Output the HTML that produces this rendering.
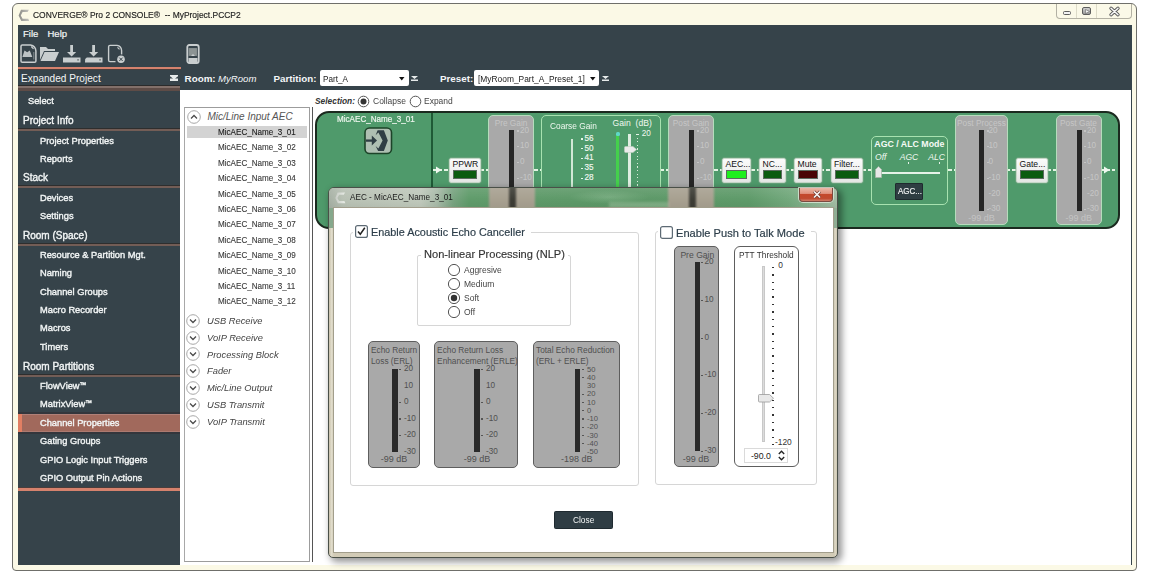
<!DOCTYPE html><html><head><meta charset="utf-8"><style>
*{margin:0;padding:0;box-sizing:border-box}
html,body{width:1152px;height:576px;overflow:hidden;background:#fff;font-family:"Liberation Sans",sans-serif}
.a{position:absolute}
.t{position:absolute;white-space:pre;line-height:1}
svg{position:absolute;overflow:visible}
</style></head><body>
<div class="a" style="left:12px;top:3px;width:1125px;height:568px;border:1px solid #6f6f6a;border-radius:6px 6px 4px 4px;background:#fbf9e6"></div>
<svg style="left:0;top:0" width="40" height="30" viewBox="0 0 40 30"><defs><linearGradient id="cg" x1="0" y1="0" x2="1" y2="0"><stop offset="0" stop-color="#8c8c88"/><stop offset="1" stop-color="#c4c4be"/></linearGradient></defs><path d="M21 9.8 H28.9 L27.6 12.1 H22.6 L20.8 15.4 L22.6 18.8 H28.3 L29.2 21 H21.3 L18.6 15.4 Z" fill="url(#cg)"/></svg>
<div class="t" style="left:33.00px;top:11.01px;font-size:8.968px;color:#1c1c1c;transform:scaleX(0.9434);transform-origin:0 0;-webkit-text-stroke:0.15px #1c1c1c">CONVERGE® Pro 2 CONSOLE®  -- MyProject.PCCP2</div>
<div class="a" style="left:1056px;top:4px;width:76px;height:15px;border:1px solid #b3b1a4;border-top:none;border-radius:0 0 4px 4px;background:#fbf9e8"></div>
<div class="a" style="left:1076px;top:4px;width:1px;height:14px;background:#dddbc8"></div>
<div class="a" style="left:1096px;top:4px;width:1px;height:14px;background:#dddbc8"></div>
<div class="a" style="left:1062.5px;top:11px;width:8.5px;height:4px;border:1px solid #5c5c5c;border-radius:1.5px;background:#f2f2f2"></div>
<div class="a" style="left:1082px;top:7.3px;width:9.299999999999955px;height:7.7px;border:1px solid #5c5c5c;border-radius:2px;background:linear-gradient(#cfcfcf,#9a9a9a)"></div>
<svg style="left:1084.5px;top:9px" width="5" height="5" viewBox="0 0 5 5"><path d="M0.5 0.5 L4.5 2.5 L0.5 4.5 Z" fill="#f4f4f4" stroke="#555" stroke-width="0.5"/></svg>
<svg style="left:1109px;top:7px" width="11" height="9" viewBox="0 0 11 9"><path d="M2 1.3 L9 7.7 M9 1.3 L2 7.7" stroke="#5a5a5a" stroke-width="3.4" stroke-linecap="round"/><path d="M2 1.3 L9 7.7 M9 1.3 L2 7.7" stroke="#f8f8f8" stroke-width="1.5" stroke-linecap="round"/></svg>
<div class="a" style="left:18px;top:25px;width:1114px;height:540px;background:#36434a"></div>
<div class="t" style="left:23.00px;top:29.46px;font-size:9.500px;color:#f4f6f6;-webkit-text-stroke:0.2px #f4f6f6">File</div>
<div class="t" style="left:47.50px;top:29.46px;font-size:9.500px;color:#f4f6f6;-webkit-text-stroke:0.2px #f4f6f6">Help</div>
<svg style="left:20px;top:44px" width="18" height="20" viewBox="0 0 18 20">
<path d="M2.3 0.9 H10.5 Q15.6 1.8 15.9 7 V17 Q15.9 18.3 14.6 18.3 H2.3 Q1 18.3 1 17 V2.2 Q1 0.9 2.3 0.9 Z" fill="none" stroke="#c9cecf" stroke-width="1.5"/>
<path d="M11.3 2.5 L13.5 4.8" stroke="#c9cecf" stroke-width="1.2"/>
<path d="M2.4 13 L4.5 6.5 L7.2 8.2 L9.8 6.5 L12.3 13 Z" fill="#c9cecf" opacity="0.92"/>
<path d="M13.8 8 V15.5" stroke="#c9cecf" stroke-width="0.9" opacity="0.6"/>
</svg>
<svg style="left:39px;top:45px" width="21" height="17" viewBox="0 0 21 17">
<path d="M1 2 H7 L9 4 H16 V6 H5 L1 15 Z" fill="#c9cecf"/>
<path d="M5.5 7 H20 L16 16 H1.5 Z" fill="#c9cecf"/>
</svg>
<svg style="left:62px;top:44px" width="19" height="20" viewBox="0 0 19 20">
<path d="M8.2 1 H11 V8 H14.2 L9.6 12.6 L5 8 H8.2 Z" fill="#c9cecf"/>
<path d="M1 13.5 H18.5 V18.5 H1 Z" fill="#c9cecf"/>
<path d="M15.3 15.2 H16.8 V16.4 H15.3 Z" fill="#55605f"/>
</svg>
<svg style="left:84px;top:44px" width="19" height="20" viewBox="0 0 19 20">
<path d="M8.2 1 H11 V8 H14.2 L9.6 12.6 L5 8 H8.2 Z" fill="#c9cecf"/>
<path d="M2.8 13.5 H18.5 V18.5 H1 L1.2 15 Z" fill="#c9cecf"/>
<path d="M15.3 15.2 H16.8 V16.4 H15.3 Z" fill="#55605f"/>
</svg>
<svg style="left:107px;top:44px" width="19" height="20" viewBox="0 0 19 20">
<path d="M8.5 17.6 H3 Q1.6 17.6 1.6 16.2 V2.8 Q1.6 1.4 3 1.4 H10 Q14.3 2 14.6 6.5 V10.5" fill="none" stroke="#c9cecf" stroke-width="1.4"/>
<path d="M10.5 3.3 L12.5 5.3" stroke="#c9cecf" stroke-width="1.1"/>
<circle cx="14" cy="15.3" r="4.6" fill="#36434a"/><circle cx="14" cy="15.3" r="3.8" fill="#c9cecf"/>
<path d="M12.3 13.6 L15.7 17 M15.7 13.6 L12.3 17" stroke="#36434a" stroke-width="1"/>
</svg>
<svg style="left:186px;top:44px" width="14" height="20" viewBox="0 0 14 20">
<rect x="1.3" y="1" width="11.4" height="18" rx="2" fill="none" stroke="#c9cecf" stroke-width="1.8"/>
<rect x="3" y="4" width="8" height="8" fill="#7d8586"/>
<path d="M3 4 V12 M5 4 V12 M7 4 V12 M9 4 V12 M3 6 H11 M3 8 H11 M3 10 H11" stroke="#9aa2a3" stroke-width="0.6"/>
<path d="M5 12 L7 10 L9 12 Z" fill="#c9cecf"/>
<rect x="2.5" y="14" width="9" height="4" fill="#c9cecf"/>
</svg>
<div class="a" style="left:18px;top:66.6px;width:163px;height:2.8000000000000114px;background:#d6826d"></div>
<div class="a" style="left:18px;top:69.4px;width:163px;height:0.7999999999999972px;background:#4a3e3c"></div>
<div class="t" style="left:21.00px;top:74.15px;font-size:10.100px;color:#f4f6f6;">Expanded Project</div>
<svg style="left:170px;top:75px" width="8" height="6" viewBox="0 0 8 6"><path d="M0 0 H8 V1 L5 3.5 H8 V5.5 H0 V3.5 H3 L0 1 Z" fill="#e8ecec"/></svg>
<div class="a" style="left:18px;top:85px;width:162px;height:1px;background:#2b2b2b"></div>
<div class="a" style="left:18px;top:86px;width:162px;height:2px;background:#82706a"></div>
<div class="a" style="left:18px;top:88px;width:162px;height:3px;background:#5e4c47"></div>
<div class="t" style="left:28.00px;top:96.37px;font-size:9.951px;color:#f2f5f5;transform:scaleX(0.9346);transform-origin:0 0;-webkit-text-stroke:0.4px #f2f5f5">Select</div>
<div class="t" style="left:22.50px;top:114.71px;font-size:10.500px;color:#f2f5f5;transform:scaleX(0.9524);transform-origin:0 0;-webkit-text-stroke:0.4px #f2f5f5">Project Info</div>
<div class="a" style="left:18px;top:128px;width:162px;height:1px;background:#2e2e2e"></div>
<div class="a" style="left:18px;top:129px;width:162px;height:2px;background:#735d56"></div>
<div class="t" style="left:39.70px;top:135.57px;font-size:9.951px;color:#f2f5f5;transform:scaleX(0.9346);transform-origin:0 0;-webkit-text-stroke:0.4px #f2f5f5">Project Properties</div>
<div class="t" style="left:39.70px;top:154.17px;font-size:9.951px;color:#f2f5f5;transform:scaleX(0.9346);transform-origin:0 0;-webkit-text-stroke:0.4px #f2f5f5">Reports</div>
<div class="t" style="left:22.50px;top:172.01px;font-size:10.500px;color:#f2f5f5;transform:scaleX(0.9524);transform-origin:0 0;-webkit-text-stroke:0.4px #f2f5f5">Stack</div>
<div class="a" style="left:18px;top:185px;width:162px;height:1px;background:#2e2e2e"></div>
<div class="a" style="left:18px;top:186px;width:162px;height:2px;background:#735d56"></div>
<div class="t" style="left:39.70px;top:192.82px;font-size:9.951px;color:#f2f5f5;transform:scaleX(0.9346);transform-origin:0 0;-webkit-text-stroke:0.4px #f2f5f5">Devices</div>
<div class="t" style="left:39.70px;top:211.27px;font-size:9.951px;color:#f2f5f5;transform:scaleX(0.9346);transform-origin:0 0;-webkit-text-stroke:0.4px #f2f5f5">Settings</div>
<div class="t" style="left:22.50px;top:229.86px;font-size:10.500px;color:#f2f5f5;transform:scaleX(0.9524);transform-origin:0 0;-webkit-text-stroke:0.4px #f2f5f5">Room (Space)</div>
<div class="a" style="left:18px;top:243px;width:162px;height:1px;background:#2e2e2e"></div>
<div class="a" style="left:18px;top:244px;width:162px;height:2px;background:#735d56"></div>
<div class="t" style="left:39.70px;top:249.57px;font-size:9.951px;color:#f2f5f5;transform:scaleX(0.9346);transform-origin:0 0;-webkit-text-stroke:0.4px #f2f5f5">Resource &amp; Partition Mgt.</div>
<div class="t" style="left:39.70px;top:268.27px;font-size:9.951px;color:#f2f5f5;transform:scaleX(0.9346);transform-origin:0 0;-webkit-text-stroke:0.4px #f2f5f5">Naming</div>
<div class="t" style="left:39.70px;top:286.57px;font-size:9.951px;color:#f2f5f5;transform:scaleX(0.9346);transform-origin:0 0;-webkit-text-stroke:0.4px #f2f5f5">Channel Groups</div>
<div class="t" style="left:39.70px;top:304.87px;font-size:9.951px;color:#f2f5f5;transform:scaleX(0.9346);transform-origin:0 0;-webkit-text-stroke:0.4px #f2f5f5">Macro Recorder</div>
<div class="t" style="left:39.70px;top:323.27px;font-size:9.951px;color:#f2f5f5;transform:scaleX(0.9346);transform-origin:0 0;-webkit-text-stroke:0.4px #f2f5f5">Macros</div>
<div class="t" style="left:39.70px;top:341.97px;font-size:9.951px;color:#f2f5f5;transform:scaleX(0.9346);transform-origin:0 0;-webkit-text-stroke:0.4px #f2f5f5">Timers</div>
<div class="t" style="left:22.50px;top:360.61px;font-size:10.500px;color:#f2f5f5;transform:scaleX(0.9524);transform-origin:0 0;-webkit-text-stroke:0.4px #f2f5f5">Room Partitions</div>
<div class="a" style="left:18px;top:374px;width:162px;height:1px;background:#2e2e2e"></div>
<div class="a" style="left:18px;top:375px;width:162px;height:2px;background:#735d56"></div>
<div class="t" style="left:39.70px;top:380.57px;font-size:9.951px;color:#f2f5f5;transform:scaleX(0.9346);transform-origin:0 0;-webkit-text-stroke:0.4px #f2f5f5">FlowView<span style="font-size:70%;vertical-align:2px">™</span></div>
<div class="t" style="left:39.70px;top:399.37px;font-size:9.951px;color:#f2f5f5;transform:scaleX(0.9346);transform-origin:0 0;-webkit-text-stroke:0.4px #f2f5f5">MatrixView<span style="font-size:70%;vertical-align:2px">™</span></div>
<div class="a" style="left:18px;top:411.5px;width:162px;height:22.0px;background:#34363c"></div>
<div class="a" style="left:18px;top:413.5px;width:162px;height:18.0px;background:#a1695c;border-top:1px solid #b08078;border-bottom:1px solid #ad7a70"></div>
<div class="a" style="left:18px;top:413.5px;width:4px;height:18.0px;background:#e17f63"></div>
<div class="t" style="left:39.70px;top:418.07px;font-size:9.951px;color:#f2f5f5;transform:scaleX(0.9346);transform-origin:0 0;-webkit-text-stroke:0.4px #f2f5f5">Channel Properties</div>
<div class="t" style="left:39.70px;top:436.37px;font-size:9.951px;color:#f2f5f5;transform:scaleX(0.9346);transform-origin:0 0;-webkit-text-stroke:0.4px #f2f5f5">Gating Groups</div>
<div class="t" style="left:39.70px;top:455.17px;font-size:9.951px;color:#f2f5f5;transform:scaleX(0.9346);transform-origin:0 0;-webkit-text-stroke:0.4px #f2f5f5">GPIO Logic Input Triggers</div>
<div class="t" style="left:39.70px;top:473.17px;font-size:9.951px;color:#f2f5f5;transform:scaleX(0.9346);transform-origin:0 0;-webkit-text-stroke:0.4px #f2f5f5">GPIO Output Pin Actions</div>
<div class="a" style="left:18px;top:487px;width:163px;height:1px;background:#4a3e3c"></div>
<div class="a" style="left:18px;top:488px;width:163px;height:3px;background:#d6826d"></div>
<svg style="left:170px;top:76px" width="8" height="5" viewBox="0 0 8 5"><path d="M0 0 H8 L4 3 Z M0 3.6 H8 V5 H0 Z" fill="#e6eaea"/></svg>
<div class="t" style="left:184.60px;top:74.20px;font-size:9.800px;color:#f4f6f8;font-weight:bold">Room:</div>
<div class="t" style="left:218.00px;top:74.37px;font-size:9.600px;color:#f4f6f8;font-style:italic">MyRoom</div>
<div class="t" style="left:273.50px;top:74.20px;font-size:9.800px;color:#f4f6f8;font-weight:bold">Partition:</div>
<div class="a" style="left:320px;top:70px;width:89px;height:16px;background:#fff;border-radius:2px"></div>
<div class="t" style="left:322.50px;top:74.69px;font-size:8.639px;color:#222;transform:scaleX(0.9434);transform-origin:0 0;">Part_A</div>
<svg style="left:398.5px;top:76.5px" width="5.5" height="3.5" viewBox="0 0 5.5 3.5"><path d="M0 0 H5.5 L2.75 3.5 Z" fill="#111"/></svg>
<svg style="left:411px;top:76px" width="7" height="5" viewBox="0 0 7 5"><path d="M0 0 H7 L3.5 3 Z M0 3.6 H7 V5 H0 Z" fill="#e6eaea"/></svg>
<div class="t" style="left:440.00px;top:74.20px;font-size:9.800px;color:#f4f6f8;font-weight:bold">Preset:</div>
<div class="a" style="left:474px;top:70px;width:125px;height:16px;background:#fff;border-radius:2px"></div>
<div class="t" style="left:477.50px;top:74.53px;font-size:8.820px;color:#222;transform:scaleX(0.9524);transform-origin:0 0;">[MyRoom_Part_A_Preset_1]</div>
<svg style="left:590px;top:76.5px" width="5.5" height="3.5" viewBox="0 0 5.5 3.5"><path d="M0 0 H5.5 L2.75 3.5 Z" fill="#111"/></svg>
<svg style="left:602px;top:76px" width="7" height="5" viewBox="0 0 7 5"><path d="M0 0 H7 L3.5 3 Z M0 3.6 H7 V5 H0 Z" fill="#e6eaea"/></svg>
<div class="a" style="left:180px;top:90px;width:951px;height:475px;background:#fff"></div>
<div class="t" style="left:315.00px;top:96.79px;font-size:8.400px;color:#333;font-weight:bold;font-style:italic">Selection:</div>
<svg style="left:357px;top:95px" width="13" height="13" viewBox="0 0 13 13"><circle cx="6.5" cy="6.5" r="5.3" fill="#fff" stroke="#555" stroke-width="1"/><circle cx="6.5" cy="6.5" r="3" fill="#333"/></svg>
<div class="t" style="left:372.80px;top:97.04px;font-size:8.925px;color:#444;transform:scaleX(0.9524);transform-origin:0 0;">Collapse</div>
<svg style="left:408.5px;top:95px" width="13" height="13" viewBox="0 0 13 13"><circle cx="6.5" cy="6.5" r="5.3" fill="#fff" stroke="#555" stroke-width="1"/></svg>
<div class="t" style="left:424.20px;top:97.04px;font-size:8.925px;color:#444;transform:scaleX(0.9524);transform-origin:0 0;">Expand</div>
<div class="a" style="left:184px;top:107px;width:126px;height:455px;border:1px solid #9c9c9c;border-left-color:#a8a8a8;background:#fff"></div>
<div class="a" style="left:311.5px;top:107px;width:1.5px;height:455px;background:#555"></div>
<svg style="left:186.5px;top:110px" width="14" height="14" viewBox="-7 -7 14 14"><circle r="6.3" fill="#fff" stroke="#a8a8a8" stroke-width="1"/><path d="M-3 1.5 L0 -1.5 L3 1.5" fill="none" stroke="#4a4a4a" stroke-width="1.25"/></svg>
<div class="t" style="left:207.40px;top:111.83px;font-size:10.000px;color:#555;font-style:italic">Mic/Line Input AEC</div>
<div class="a" style="left:187px;top:126px;width:120px;height:12px;background:#d3d3d3"></div>
<div class="t" style="left:217.80px;top:128.02px;font-size:9.072px;color:#1a1a1a;transform:scaleX(0.8929);transform-origin:0 0;-webkit-text-stroke:0.12px #1a1a1a">MicAEC_Name_3_01</div>
<div class="t" style="left:217.80px;top:143.42px;font-size:9.072px;color:#383838;transform:scaleX(0.8929);transform-origin:0 0;-webkit-text-stroke:0.12px #383838">MicAEC_Name_3_02</div>
<div class="t" style="left:217.80px;top:158.82px;font-size:9.072px;color:#383838;transform:scaleX(0.8929);transform-origin:0 0;-webkit-text-stroke:0.12px #383838">MicAEC_Name_3_03</div>
<div class="t" style="left:217.80px;top:174.22px;font-size:9.072px;color:#383838;transform:scaleX(0.8929);transform-origin:0 0;-webkit-text-stroke:0.12px #383838">MicAEC_Name_3_04</div>
<div class="t" style="left:217.80px;top:189.62px;font-size:9.072px;color:#383838;transform:scaleX(0.8929);transform-origin:0 0;-webkit-text-stroke:0.12px #383838">MicAEC_Name_3_05</div>
<div class="t" style="left:217.80px;top:205.02px;font-size:9.072px;color:#383838;transform:scaleX(0.8929);transform-origin:0 0;-webkit-text-stroke:0.12px #383838">MicAEC_Name_3_06</div>
<div class="t" style="left:217.80px;top:220.42px;font-size:9.072px;color:#383838;transform:scaleX(0.8929);transform-origin:0 0;-webkit-text-stroke:0.12px #383838">MicAEC_Name_3_07</div>
<div class="t" style="left:217.80px;top:235.82px;font-size:9.072px;color:#383838;transform:scaleX(0.8929);transform-origin:0 0;-webkit-text-stroke:0.12px #383838">MicAEC_Name_3_08</div>
<div class="t" style="left:217.80px;top:251.22px;font-size:9.072px;color:#383838;transform:scaleX(0.8929);transform-origin:0 0;-webkit-text-stroke:0.12px #383838">MicAEC_Name_3_09</div>
<div class="t" style="left:217.80px;top:266.62px;font-size:9.072px;color:#383838;transform:scaleX(0.8929);transform-origin:0 0;-webkit-text-stroke:0.12px #383838">MicAEC_Name_3_10</div>
<div class="t" style="left:217.80px;top:282.02px;font-size:9.072px;color:#383838;transform:scaleX(0.8929);transform-origin:0 0;-webkit-text-stroke:0.12px #383838">MicAEC_Name_3_11</div>
<div class="t" style="left:217.80px;top:297.42px;font-size:9.072px;color:#383838;transform:scaleX(0.8929);transform-origin:0 0;-webkit-text-stroke:0.12px #383838">MicAEC_Name_3_12</div>
<svg style="left:186.4px;top:313.7px" width="14" height="14" viewBox="-7 -7 14 14"><circle r="6.3" fill="#fff" stroke="#a8a8a8" stroke-width="1"/><path d="M-3 -1.5 L0 1.5 L3 -1.5" fill="none" stroke="#4a4a4a" stroke-width="1.25"/></svg>
<div class="t" style="left:207.20px;top:315.99px;font-size:9.818px;color:#444;transform:scaleX(0.9524);transform-origin:0 0;font-style:italic">USB Receive</div>
<svg style="left:186.4px;top:330.52px" width="14" height="14" viewBox="-7 -7 14 14"><circle r="6.3" fill="#fff" stroke="#a8a8a8" stroke-width="1"/><path d="M-3 -1.5 L0 1.5 L3 -1.5" fill="none" stroke="#4a4a4a" stroke-width="1.25"/></svg>
<div class="t" style="left:207.20px;top:332.81px;font-size:9.818px;color:#444;transform:scaleX(0.9524);transform-origin:0 0;font-style:italic">VoIP Receive</div>
<svg style="left:186.4px;top:347.34px" width="14" height="14" viewBox="-7 -7 14 14"><circle r="6.3" fill="#fff" stroke="#a8a8a8" stroke-width="1"/><path d="M-3 -1.5 L0 1.5 L3 -1.5" fill="none" stroke="#4a4a4a" stroke-width="1.25"/></svg>
<div class="t" style="left:207.20px;top:349.63px;font-size:9.818px;color:#444;transform:scaleX(0.9524);transform-origin:0 0;font-style:italic">Processing Block</div>
<svg style="left:186.4px;top:364.15999999999997px" width="14" height="14" viewBox="-7 -7 14 14"><circle r="6.3" fill="#fff" stroke="#a8a8a8" stroke-width="1"/><path d="M-3 -1.5 L0 1.5 L3 -1.5" fill="none" stroke="#4a4a4a" stroke-width="1.25"/></svg>
<div class="t" style="left:207.20px;top:366.45px;font-size:9.818px;color:#444;transform:scaleX(0.9524);transform-origin:0 0;font-style:italic">Fader</div>
<svg style="left:186.4px;top:380.98px" width="14" height="14" viewBox="-7 -7 14 14"><circle r="6.3" fill="#fff" stroke="#a8a8a8" stroke-width="1"/><path d="M-3 -1.5 L0 1.5 L3 -1.5" fill="none" stroke="#4a4a4a" stroke-width="1.25"/></svg>
<div class="t" style="left:207.20px;top:383.27px;font-size:9.818px;color:#444;transform:scaleX(0.9524);transform-origin:0 0;font-style:italic">Mic/Line Output</div>
<svg style="left:186.4px;top:397.79999999999995px" width="14" height="14" viewBox="-7 -7 14 14"><circle r="6.3" fill="#fff" stroke="#a8a8a8" stroke-width="1"/><path d="M-3 -1.5 L0 1.5 L3 -1.5" fill="none" stroke="#4a4a4a" stroke-width="1.25"/></svg>
<div class="t" style="left:207.20px;top:400.09px;font-size:9.818px;color:#444;transform:scaleX(0.9524);transform-origin:0 0;font-style:italic">USB Transmit</div>
<svg style="left:186.4px;top:414.62px" width="14" height="14" viewBox="-7 -7 14 14"><circle r="6.3" fill="#fff" stroke="#a8a8a8" stroke-width="1"/><path d="M-3 -1.5 L0 1.5 L3 -1.5" fill="none" stroke="#4a4a4a" stroke-width="1.25"/></svg>
<div class="t" style="left:207.20px;top:416.91px;font-size:9.818px;color:#444;transform:scaleX(0.9524);transform-origin:0 0;font-style:italic">VoIP Transmit</div>
<div class="a" style="left:315px;top:111px;width:805px;height:118px;border:2px solid #1b2a1f;border-radius:14px;background:#4f9a6b"></div>
<div class="t" style="left:337.00px;top:115.32px;font-size:9.072px;color:#eef6ee;transform:scaleX(0.8929);transform-origin:0 0;-webkit-text-stroke:0.2px #eef6ee">MicAEC_Name_3_01</div>
<svg style="left:362px;top:125px" width="32" height="32" viewBox="0 0 32 32">
<rect x="3" y="3" width="26.5" height="25.5" rx="4.5" fill="#aebfb2" stroke="#1d4429" stroke-width="1.6"/>
<path d="M13.6 10.3 L15.6 5.3 H21.9 L25.8 15.6 L21.9 26.1 H16.1 L13.6 21.1 L16.4 23.6 L20.6 15.6 L16.4 7.6 Z" fill="#2f3e44"/>
<path d="M4 15.6 H10.5" stroke="#2f3e44" stroke-width="2.3"/>
<path d="M9.8 10.6 L15 15.6 L9.8 20.6 Z" fill="#2f3e44"/>
</svg>
<div class="a" style="left:431px;top:113px;width:1.5px;height:114px;background:#1f5a36"></div>
<div class="a" style="left:433px;top:169.3px;width:16px;height:1.5px;background:repeating-linear-gradient(90deg,#e4f4e4 0 3.5px,transparent 3.5px 5.5px)"></div>
<div class="a" style="left:481px;top:169.3px;width:7px;height:1.5px;background:repeating-linear-gradient(90deg,#e4f4e4 0 3.5px,transparent 3.5px 5.5px)"></div>
<div class="a" style="left:534px;top:169.3px;width:7px;height:1.5px;background:repeating-linear-gradient(90deg,#e4f4e4 0 3.5px,transparent 3.5px 5.5px)"></div>
<div class="a" style="left:661px;top:169.3px;width:7px;height:1.5px;background:repeating-linear-gradient(90deg,#e4f4e4 0 3.5px,transparent 3.5px 5.5px)"></div>
<div class="a" style="left:714px;top:169.3px;width:8px;height:1.5px;background:repeating-linear-gradient(90deg,#e4f4e4 0 3.5px,transparent 3.5px 5.5px)"></div>
<div class="a" style="left:751px;top:169.3px;width:8px;height:1.5px;background:repeating-linear-gradient(90deg,#e4f4e4 0 3.5px,transparent 3.5px 5.5px)"></div>
<div class="a" style="left:785px;top:169.3px;width:9px;height:1.5px;background:repeating-linear-gradient(90deg,#e4f4e4 0 3.5px,transparent 3.5px 5.5px)"></div>
<div class="a" style="left:821px;top:169.3px;width:9px;height:1.5px;background:repeating-linear-gradient(90deg,#e4f4e4 0 3.5px,transparent 3.5px 5.5px)"></div>
<div class="a" style="left:863px;top:169.3px;width:8px;height:1.5px;background:repeating-linear-gradient(90deg,#e4f4e4 0 3.5px,transparent 3.5px 5.5px)"></div>
<div class="a" style="left:948px;top:169.3px;width:7px;height:1.5px;background:repeating-linear-gradient(90deg,#e4f4e4 0 3.5px,transparent 3.5px 5.5px)"></div>
<div class="a" style="left:1007px;top:169.3px;width:9px;height:1.5px;background:repeating-linear-gradient(90deg,#e4f4e4 0 3.5px,transparent 3.5px 5.5px)"></div>
<div class="a" style="left:1048px;top:169.3px;width:8px;height:1.5px;background:repeating-linear-gradient(90deg,#e4f4e4 0 3.5px,transparent 3.5px 5.5px)"></div>
<div class="a" style="left:1101px;top:169.3px;width:16px;height:1.5px;background:repeating-linear-gradient(90deg,#e4f4e4 0 3.5px,transparent 3.5px 5.5px)"></div>
<svg style="left:436px;top:166px" width="6" height="8" viewBox="0 0 6 8"><path d="M0 0.5 L5.5 4 L0 7.5 Z" fill="#f0f8f0"/></svg>
<svg style="left:1104px;top:166px" width="6" height="8" viewBox="0 0 6 8"><path d="M0 0.5 L5.5 4 L0 7.5 Z" fill="#f0f8f0"/></svg>
<div class="a" style="left:449px;top:157.5px;width:32px;height:25.5px;background:linear-gradient(#fbfbfb,#e4e6e4);border:1px solid #c5d8c8;border-radius:2px;box-shadow:0 0 0 0.5px #7fa88a"></div>
<div class="t" style="left:452.50px;top:159.92px;font-size:8.600px;color:#111;">PPWR</div>
<div class="a" style="left:453px;top:170px;width:24px;height:9px;background:#0b5c10;border:1px solid #5c6b60"></div>
<div class="a" style="left:722px;top:157.5px;width:29px;height:25.5px;background:linear-gradient(#fbfbfb,#e4e6e4);border:1px solid #c5d8c8;border-radius:2px;box-shadow:0 0 0 0.5px #7fa88a"></div>
<div class="t" style="left:725.50px;top:159.92px;font-size:8.600px;color:#111;">AEC...</div>
<div class="a" style="left:726px;top:170px;width:21px;height:9px;background:#1ef01e;border:1px solid #5c6b60"></div>
<div class="a" style="left:759px;top:157.5px;width:26.5px;height:25.5px;background:linear-gradient(#fbfbfb,#e4e6e4);border:1px solid #c5d8c8;border-radius:2px;box-shadow:0 0 0 0.5px #7fa88a"></div>
<div class="t" style="left:762.50px;top:159.92px;font-size:8.600px;color:#111;">NC...</div>
<div class="a" style="left:763px;top:170px;width:18.5px;height:9px;background:#0b5c10;border:1px solid #5c6b60"></div>
<div class="a" style="left:794px;top:157.5px;width:27.5px;height:25.5px;background:linear-gradient(#fbfbfb,#e4e6e4);border:1px solid #c5d8c8;border-radius:2px;box-shadow:0 0 0 0.5px #7fa88a"></div>
<div class="t" style="left:797.50px;top:159.92px;font-size:8.600px;color:#111;">Mute</div>
<div class="a" style="left:798px;top:170px;width:19.5px;height:9px;background:#4a0505;border:1px solid #5c6b60"></div>
<div class="a" style="left:830.5px;top:157.5px;width:32.5px;height:25.5px;background:linear-gradient(#fbfbfb,#e4e6e4);border:1px solid #c5d8c8;border-radius:2px;box-shadow:0 0 0 0.5px #7fa88a"></div>
<div class="t" style="left:834.00px;top:159.92px;font-size:8.600px;color:#111;">Filter...</div>
<div class="a" style="left:834.5px;top:170px;width:24.5px;height:9px;background:#0b5c10;border:1px solid #5c6b60"></div>
<div class="a" style="left:1016px;top:157.5px;width:32px;height:25.5px;background:linear-gradient(#fbfbfb,#e4e6e4);border:1px solid #c5d8c8;border-radius:2px;box-shadow:0 0 0 0.5px #7fa88a"></div>
<div class="t" style="left:1019.50px;top:159.92px;font-size:8.600px;color:#111;">Gate...</div>
<div class="a" style="left:1020px;top:170px;width:24px;height:9px;background:#0b5c10;border:1px solid #5c6b60"></div>
<div class="a" style="left:488px;top:115px;width:46px;height:110px;background:#a9a9a9;border:1.5px solid #b6dcbc;border-radius:5px"></div>
<div class="a" style="left:489.5px;top:116px;width:43px;height:14px;overflow:hidden;display:flex;justify-content:center"><div style="white-space:pre;line-height:1;margin-top:3.47px;font-size:8.3px;color:#c6c6c6;flex:none;">Pre Gain</div></div>
<div class="a" style="left:509px;top:130px;width:5px;height:80.5px;background:#262626"></div>
<div class="a" style="left:516.5px;top:130px;width:2.0px;height:2px;background:#c4c4c4"></div>
<div class="t" style="left:520.00px;top:126.56px;font-size:8.200px;color:#c6c6c6;">20</div>
<div class="a" style="left:516.5px;top:146px;width:2.0px;height:1px;background:#c4c4c4"></div>
<div class="t" style="left:520.00px;top:142.31px;font-size:8.200px;color:#c6c6c6;">10</div>
<div class="a" style="left:516.5px;top:162px;width:2.0px;height:1px;background:#c4c4c4"></div>
<div class="t" style="left:520.00px;top:158.06px;font-size:8.200px;color:#c6c6c6;">0</div>
<div class="a" style="left:516.5px;top:178px;width:2.0px;height:1px;background:#c4c4c4"></div>
<div class="t" style="left:520.00px;top:173.81px;font-size:8.200px;color:#c6c6c6;">-10</div>
<div class="a" style="left:516.5px;top:194px;width:2.0px;height:0px;background:#c4c4c4"></div>
<div class="t" style="left:520.00px;top:189.56px;font-size:8.200px;color:#c6c6c6;">-20</div>
<div class="a" style="left:516.5px;top:209px;width:2.0px;height:1px;background:#c4c4c4"></div>
<div class="t" style="left:520.00px;top:205.31px;font-size:8.200px;color:#c6c6c6;">-30</div>
<div class="t" style="left:498.00px;top:213.88px;font-size:9.000px;color:#c4c4c4;">-99 dB</div>
<div class="a" style="left:668px;top:115px;width:46px;height:110px;background:#a9a9a9;border:1.5px solid #b6dcbc;border-radius:5px"></div>
<div class="a" style="left:669.5px;top:116px;width:43px;height:14px;overflow:hidden;display:flex;justify-content:center"><div style="white-space:pre;line-height:1;margin-top:3.47px;font-size:8.3px;color:#c6c6c6;flex:none;">Post Gain</div></div>
<div class="a" style="left:689px;top:130px;width:5px;height:80.5px;background:#262626"></div>
<div class="a" style="left:696.5px;top:130px;width:2.0px;height:2px;background:#c4c4c4"></div>
<div class="t" style="left:700.00px;top:126.56px;font-size:8.200px;color:#c6c6c6;">20</div>
<div class="a" style="left:696.5px;top:146px;width:2.0px;height:1px;background:#c4c4c4"></div>
<div class="t" style="left:700.00px;top:142.31px;font-size:8.200px;color:#c6c6c6;">10</div>
<div class="a" style="left:696.5px;top:162px;width:2.0px;height:1px;background:#c4c4c4"></div>
<div class="t" style="left:700.00px;top:158.06px;font-size:8.200px;color:#c6c6c6;">0</div>
<div class="a" style="left:696.5px;top:178px;width:2.0px;height:1px;background:#c4c4c4"></div>
<div class="t" style="left:700.00px;top:173.81px;font-size:8.200px;color:#c6c6c6;">-10</div>
<div class="a" style="left:696.5px;top:194px;width:2.0px;height:0px;background:#c4c4c4"></div>
<div class="t" style="left:700.00px;top:189.56px;font-size:8.200px;color:#c6c6c6;">-20</div>
<div class="a" style="left:696.5px;top:209px;width:2.0px;height:1px;background:#c4c4c4"></div>
<div class="t" style="left:700.00px;top:205.31px;font-size:8.200px;color:#c6c6c6;">-30</div>
<div class="t" style="left:678.00px;top:213.88px;font-size:9.000px;color:#c4c4c4;">-99 dB</div>
<div class="a" style="left:955px;top:115px;width:52.5px;height:110px;background:#a9a9a9;border:1.5px solid #b6dcbc;border-radius:5px"></div>
<div class="a" style="left:956.5px;top:116px;width:49.5px;height:14px;overflow:hidden;display:flex;justify-content:center"><div style="white-space:pre;line-height:1;margin-top:3.47px;font-size:8.3px;color:#c6c6c6;flex:none;align-self:flex-start;margin-left:0.5px;margin-right:auto">Post Process</div></div>
<div class="a" style="left:979px;top:130px;width:5px;height:80.5px;background:#262626"></div>
<div class="a" style="left:986.5px;top:130px;width:2.0px;height:2px;background:#c4c4c4"></div>
<div class="t" style="left:988.50px;top:126.56px;font-size:8.200px;color:#c6c6c6;">20</div>
<div class="a" style="left:986.5px;top:146px;width:2.0px;height:1px;background:#c4c4c4"></div>
<div class="t" style="left:988.50px;top:142.31px;font-size:8.200px;color:#c6c6c6;">10</div>
<div class="a" style="left:986.5px;top:162px;width:2.0px;height:1px;background:#c4c4c4"></div>
<div class="t" style="left:988.50px;top:158.06px;font-size:8.200px;color:#c6c6c6;">0</div>
<div class="a" style="left:986.5px;top:178px;width:2.0px;height:1px;background:#c4c4c4"></div>
<div class="t" style="left:988.50px;top:173.81px;font-size:8.200px;color:#c6c6c6;">-10</div>
<div class="a" style="left:986.5px;top:194px;width:2.0px;height:0px;background:#c4c4c4"></div>
<div class="t" style="left:988.50px;top:189.56px;font-size:8.200px;color:#c6c6c6;">-20</div>
<div class="a" style="left:986.5px;top:209px;width:2.0px;height:1px;background:#c4c4c4"></div>
<div class="t" style="left:988.50px;top:205.31px;font-size:8.200px;color:#c6c6c6;">-30</div>
<div class="t" style="left:968.25px;top:213.88px;font-size:9.000px;color:#c4c4c4;">-99 dB</div>
<div class="a" style="left:1055.5px;top:115px;width:46.0px;height:110px;background:#a9a9a9;border:1.5px solid #b6dcbc;border-radius:5px"></div>
<div class="a" style="left:1057.0px;top:116px;width:43.0px;height:14px;overflow:hidden;display:flex;justify-content:center"><div style="white-space:pre;line-height:1;margin-top:3.47px;font-size:8.3px;color:#c6c6c6;flex:none;">Post Gate</div></div>
<div class="a" style="left:1076.5px;top:130px;width:5.0px;height:80.5px;background:#262626"></div>
<div class="a" style="left:1084.0px;top:130px;width:2.0px;height:2px;background:#c4c4c4"></div>
<div class="t" style="left:1087.00px;top:126.56px;font-size:8.200px;color:#c6c6c6;">20</div>
<div class="a" style="left:1084.0px;top:146px;width:2.0px;height:1px;background:#c4c4c4"></div>
<div class="t" style="left:1087.00px;top:142.31px;font-size:8.200px;color:#c6c6c6;">10</div>
<div class="a" style="left:1084.0px;top:162px;width:2.0px;height:1px;background:#c4c4c4"></div>
<div class="t" style="left:1087.00px;top:158.06px;font-size:8.200px;color:#c6c6c6;">0</div>
<div class="a" style="left:1084.0px;top:178px;width:2.0px;height:1px;background:#c4c4c4"></div>
<div class="t" style="left:1087.00px;top:173.81px;font-size:8.200px;color:#c6c6c6;">-10</div>
<div class="a" style="left:1084.0px;top:194px;width:2.0px;height:0px;background:#c4c4c4"></div>
<div class="t" style="left:1087.00px;top:189.56px;font-size:8.200px;color:#c6c6c6;">-20</div>
<div class="a" style="left:1084.0px;top:209px;width:2.0px;height:1px;background:#c4c4c4"></div>
<div class="t" style="left:1087.00px;top:205.31px;font-size:8.200px;color:#c6c6c6;">-30</div>
<div class="t" style="left:1065.50px;top:213.88px;font-size:9.000px;color:#c4c4c4;">-99 dB</div>
<div class="a" style="left:541px;top:115px;width:120px;height:111px;border:1.5px solid #a8e2b0;border-radius:5px"></div>
<div class="t" style="left:550.00px;top:121.98px;font-size:8.768px;color:#f0f8f0;transform:scaleX(0.9524);transform-origin:0 0;">Coarse Gain</div>
<div class="t" style="left:612.60px;top:119.22px;font-size:8.600px;color:#f0f8f0;">Gain  (dB)</div>
<div class="a" style="left:570.8px;top:138.5px;width:2.0px;height:87.5px;background:#d2e8d6"></div>
<div class="a" style="left:580.5px;top:138px;width:2.0px;height:2px;background:#e8f4e8"></div>
<div class="t" style="left:584.50px;top:134.56px;font-size:8.200px;color:#f0f8f0;-webkit-text-stroke:0.15px #f0f8f0">56</div>
<div class="a" style="left:580.5px;top:148px;width:2.0px;height:1px;background:#e8f4e8"></div>
<div class="t" style="left:584.50px;top:144.51px;font-size:8.200px;color:#f0f8f0;-webkit-text-stroke:0.15px #f0f8f0">50</div>
<div class="a" style="left:580.5px;top:158px;width:2.0px;height:1px;background:#e8f4e8"></div>
<div class="t" style="left:584.50px;top:154.46px;font-size:8.200px;color:#f0f8f0;-webkit-text-stroke:0.15px #f0f8f0">41</div>
<div class="a" style="left:580.5px;top:168px;width:2.0px;height:1px;background:#e8f4e8"></div>
<div class="t" style="left:584.50px;top:164.41px;font-size:8.200px;color:#f0f8f0;-webkit-text-stroke:0.15px #f0f8f0">35</div>
<div class="a" style="left:580.5px;top:178px;width:2.0px;height:1px;background:#e8f4e8"></div>
<div class="t" style="left:584.50px;top:174.36px;font-size:8.200px;color:#f0f8f0;-webkit-text-stroke:0.15px #f0f8f0">28</div>
<div class="a" style="left:616.3px;top:134px;width:2.5px;height:92px;background:#44d04c"></div>
<div class="a" style="left:615.5px;top:132px;width:4.100000000000023px;height:4px;background:#5fd8c8;border-radius:1.5px"></div>
<div class="a" style="left:628.3px;top:134px;width:2.5px;height:92px;background:#e0eee2"></div>
<svg style="left:624px;top:146px" width="13" height="7" viewBox="0 0 13 7"><path d="M1.5 0.5 H9 L12.5 3.5 L9 6.5 H1.5 Q0.5 6.5 0.5 5.5 V1.5 Q0.5 0.5 1.5 0.5 Z" fill="#ebebeb" stroke="#c0ccc0" stroke-width="0.6"/></svg>
<div class="a" style="left:637px;top:134px;width:1.2px;height:92px;background:repeating-linear-gradient(#dcecdc 0 1.2px,transparent 1.2px 3.6px)"></div>
<div class="a" style="left:636px;top:134px;width:3px;height:1px;background:#e8f4e8"></div>
<div class="t" style="left:641.80px;top:130.26px;font-size:8.200px;color:#f0f8f0;">20</div>
<div class="a" style="left:871px;top:135.5px;width:77px;height:69.5px;border:1.5px solid #a8e2b0;border-radius:5px"></div>
<div class="t" style="left:874.30px;top:140.25px;font-size:8.800px;color:#f6fbf6;font-weight:bold">AGC / ALC Mode</div>
<div class="t" style="left:875.00px;top:152.52px;font-size:8.600px;color:#f0f8f0;font-style:italic">Off</div>
<div class="t" style="left:899.70px;top:152.52px;font-size:8.600px;color:#f0f8f0;font-style:italic">AGC</div>
<div class="t" style="left:928.30px;top:152.52px;font-size:8.600px;color:#f0f8f0;font-style:italic">ALC</div>
<div class="a" style="left:880px;top:171.5px;width:60px;height:2.5px;background:#e6f2e8"></div>
<div class="a" style="left:908px;top:162px;width:1px;height:2px;background:#e6f2e8"></div>
<div class="a" style="left:939px;top:162px;width:1px;height:2px;background:#e6f2e8"></div>
<svg style="left:875px;top:166px" width="7" height="12" viewBox="0 0 7 12"><path d="M0.5 11.5 V3.5 L3.5 0.5 L6.5 3.5 V11.5 Z" fill="#e8e8e8" stroke="#a8b8a8" stroke-width="0.8"/></svg>
<div class="a" style="left:895px;top:183px;width:28px;height:16.5px;background:#2e3d42;border:1px solid #1e2a2e;border-radius:1px"></div>
<div class="t" style="left:897.50px;top:187.39px;font-size:8.400px;color:#f4f6f6;transform:scaleX(0.9524);transform-origin:0 0;-webkit-text-stroke:0.15px #f4f6f6">AGC...</div>
<div class="a" style="left:328px;top:187px;width:510px;height:371px;border-radius:6px;box-shadow:3px 3px 7px 1px rgba(0,0,0,0.42)"></div>
<div class="a" style="left:328px;top:187px;width:510px;height:371px;border:1px solid #4a5048;border-radius:6px 6px 5px 5px;background:linear-gradient(90deg,#c8c0aa,#e0dccb 2.5px,#d2cbb6 5px,#d2cbb6 505px,#ddd8c6 507px,#c8c0aa);"></div>
<div class="a" style="left:329px;top:188px;width:508px;height:20px;border-radius:5px 5px 0 0;overflow:hidden;background:linear-gradient(90deg,#a6b0a4 0px,#b8c1b4 14px,#bfc8bb 92px,#a8baa8 108px,#78a380 124px,#5f9b6a 140px,#5c9867 300px,#5e9a69 420px,#72a87c 460px,#a2bca4 508px)"><div class="a" style="left:160px;top:-2px;width:46px;height:24px;background:#a7a090;filter:blur(1.2px)"></div><div class="a" style="left:179.5px;top:-2px;width:7px;height:24px;background:#3c3c34;filter:blur(1.2px)"></div><div class="a" style="left:339px;top:-2px;width:46px;height:24px;background:#a7a090;filter:blur(1.2px)"></div><div class="a" style="left:360px;top:-2px;width:6.5px;height:24px;background:#3c3c34;filter:blur(1.2px)"></div><div class="a" style="left:240px;top:2px;width:80px;height:14px;background:radial-gradient(closest-side,rgba(200,230,200,0.22),transparent);"></div><div class="a" style="left:280px;top:14px;width:60px;height:6px;background:rgba(230,240,220,0.25);filter:blur(1.5px)"></div><div class="a" style="left:0;top:0;width:508px;height:20px;background:linear-gradient(rgba(255,255,255,0.10),rgba(255,255,255,0) 60%,rgba(0,0,0,0.04))"></div></div>
<div class="a" style="left:329px;top:208px;width:4px;height:20px;background:#86a88c"></div>
<div class="a" style="left:833px;top:208px;width:4px;height:20px;background:#8fae94"></div>
<div class="a" style="left:333px;top:207px;width:501px;height:346px;border:1px solid #a29e8c;background:#fff"></div>
<svg style="left:0;top:0" width="360" height="210" viewBox="0 0 360 210"><defs><linearGradient id="cg2" x1="0" y1="0" x2="1" y2="0"><stop offset="0" stop-color="#c8ccc6"/><stop offset="1" stop-color="#e8ece6"/></linearGradient></defs><path d="M337.6 192.6 H345 L343.8 194.8 H339.1 L337.4 197.9 L339.1 201.1 H344.4 L345.3 203.2 H337.9 L335.3 197.9 Z" fill="url(#cg2)"/></svg>
<div class="t" style="left:349.80px;top:192.50px;font-size:8.856px;color:#1a1a1a;transform:scaleX(0.9259);transform-origin:0 0;">AEC - MicAEC_Name_3_01</div>
<div class="a" style="left:798.5px;top:187.5px;width:34.5px;height:14.0px;background:linear-gradient(#ebb8a8 0%,#e0927e 42%,#c4482c 48%,#c04a30 80%,#d07e6a 100%);border:1px solid #7c4a40;border-top:none;border-radius:0 0 4px 4px;box-shadow:0 0 0 1px rgba(225,235,220,0.75)"></div>
<svg style="left:811.5px;top:190px" width="10" height="9" viewBox="0 0 10 9"><path d="M2 1.5 L8 7.5 M8 1.5 L2 7.5" stroke="#6a3a30" stroke-width="3"/><path d="M2 1.5 L8 7.5 M8 1.5 L2 7.5" stroke="#fbf2f2" stroke-width="1.7"/></svg>
<div class="a" style="left:349.5px;top:232px;width:289.0px;height:253.5px;border:1px solid #d6d6d6;border-radius:3px"></div>
<div class="a" style="left:352.5px;top:230px;width:178.5px;height:4px;background:#fff"></div>
<svg style="left:355px;top:225px" width="13" height="13" viewBox="0 0 13 13"><rect x="0.6" y="0.6" width="11.8" height="11.8" rx="2" fill="#fff" stroke="#5d6a74" stroke-width="1.2"/><path d="M3 6.5 L5.3 9.3 L9.8 2.8" fill="none" stroke="#222" stroke-width="1.5"/></svg>
<div class="t" style="left:370.80px;top:227.05px;font-size:11.403px;color:#2d3e4a;transform:scaleX(0.9524);transform-origin:0 0;-webkit-text-stroke:0.2px #2d3e4a">Enable Acoustic Echo Canceller</div>
<div class="a" style="left:417.3px;top:254.8px;width:153.7px;height:71.0px;border:1px solid #d6d6d6;border-radius:2px"></div>
<div class="a" style="left:421px;top:252px;width:147px;height:5px;background:#fff"></div>
<div class="t" style="left:424.00px;top:249.44px;font-size:11.523px;color:#333;transform:scaleX(0.9615);transform-origin:0 0;-webkit-text-stroke:0.15px #333">Non-linear Processing (NLP)</div>
<svg style="left:447.1px;top:262.7px" width="14" height="14" viewBox="-7 -7 14 14"><circle r="5.6" fill="#fff" stroke="#555" stroke-width="1"/></svg>
<div class="t" style="left:463.50px;top:266.13px;font-size:9.180px;color:#444;transform:scaleX(0.9259);transform-origin:0 0;">Aggresive</div>
<svg style="left:447.1px;top:276.7px" width="14" height="14" viewBox="-7 -7 14 14"><circle r="5.6" fill="#fff" stroke="#555" stroke-width="1"/></svg>
<div class="t" style="left:463.50px;top:280.13px;font-size:9.180px;color:#444;transform:scaleX(0.9259);transform-origin:0 0;">Medium</div>
<svg style="left:447.1px;top:290.7px" width="14" height="14" viewBox="-7 -7 14 14"><circle r="5.6" fill="#fff" stroke="#555" stroke-width="1"/><circle r="3.2" fill="#333"/></svg>
<div class="t" style="left:463.50px;top:294.13px;font-size:9.180px;color:#444;transform:scaleX(0.9259);transform-origin:0 0;">Soft</div>
<svg style="left:447.1px;top:304.7px" width="14" height="14" viewBox="-7 -7 14 14"><circle r="5.6" fill="#fff" stroke="#555" stroke-width="1"/></svg>
<div class="t" style="left:463.50px;top:308.13px;font-size:9.180px;color:#444;transform:scaleX(0.9259);transform-origin:0 0;">Off</div>
<div class="a" style="left:367.8px;top:341px;width:52.5px;height:127.30000000000001px;background:#a9a9a9;border:1px solid #5e5e5e;border-radius:5px"></div>
<div class="t" style="left:371.00px;top:346.17px;font-size:8.300px;color:#505050;">Echo Return</div>
<div class="t" style="left:371.00px;top:357.17px;font-size:8.300px;color:#505050;">Loss (ERL)</div>
<div class="a" style="left:392px;top:369px;width:5.5px;height:82.69999999999999px;background:#2a2a2a"></div>
<div class="a" style="left:399px;top:369px;width:2px;height:1px;background:#555"></div>
<div class="t" style="left:404.00px;top:365.06px;font-size:8.200px;color:#505050;">20</div>
<div class="a" style="left:399px;top:386px;width:2px;height:0px;background:#555"></div>
<div class="t" style="left:404.00px;top:381.56px;font-size:8.200px;color:#505050;">10</div>
<div class="a" style="left:399px;top:402px;width:2px;height:1px;background:#555"></div>
<div class="t" style="left:404.00px;top:398.06px;font-size:8.200px;color:#505050;">0</div>
<div class="a" style="left:399px;top:418px;width:2px;height:2px;background:#555"></div>
<div class="t" style="left:404.00px;top:414.56px;font-size:8.200px;color:#505050;">-10</div>
<div class="a" style="left:399px;top:435px;width:2px;height:1px;background:#555"></div>
<div class="t" style="left:404.00px;top:431.06px;font-size:8.200px;color:#505050;">-20</div>
<div class="a" style="left:399px;top:452px;width:2px;height:0px;background:#555"></div>
<div class="t" style="left:404.00px;top:447.56px;font-size:8.200px;color:#505050;">-30</div>
<div class="t" style="left:380.70px;top:454.88px;font-size:9.000px;color:#505050;">-99 dB</div>
<div class="a" style="left:433.9px;top:341px;width:84.39999999999998px;height:127.30000000000001px;background:#a9a9a9;border:1px solid #5e5e5e;border-radius:5px"></div>
<div class="t" style="left:437.10px;top:346.17px;font-size:8.300px;color:#505050;">Echo Return Loss</div>
<div class="t" style="left:437.10px;top:357.17px;font-size:8.300px;color:#505050;">Enhancement (ERLE)</div>
<div class="a" style="left:474.3px;top:369px;width:5.5px;height:82.69999999999999px;background:#2a2a2a"></div>
<div class="a" style="left:481px;top:369px;width:2px;height:1px;background:#555"></div>
<div class="t" style="left:486.00px;top:365.06px;font-size:8.200px;color:#505050;">20</div>
<div class="a" style="left:481px;top:386px;width:2px;height:0px;background:#555"></div>
<div class="t" style="left:486.00px;top:381.56px;font-size:8.200px;color:#505050;">10</div>
<div class="a" style="left:481px;top:402px;width:2px;height:1px;background:#555"></div>
<div class="t" style="left:486.00px;top:398.06px;font-size:8.200px;color:#505050;">0</div>
<div class="a" style="left:481px;top:418px;width:2px;height:2px;background:#555"></div>
<div class="t" style="left:486.00px;top:414.56px;font-size:8.200px;color:#505050;">-10</div>
<div class="a" style="left:481px;top:435px;width:2px;height:1px;background:#555"></div>
<div class="t" style="left:486.00px;top:431.06px;font-size:8.200px;color:#505050;">-20</div>
<div class="a" style="left:481px;top:452px;width:2px;height:0px;background:#555"></div>
<div class="t" style="left:486.00px;top:447.56px;font-size:8.200px;color:#505050;">-30</div>
<div class="t" style="left:463.80px;top:454.88px;font-size:9.000px;color:#505050;">-99 dB</div>
<div class="a" style="left:532.8px;top:341px;width:87.40000000000009px;height:127.30000000000001px;background:#a9a9a9;border:1px solid #5e5e5e;border-radius:5px"></div>
<div class="t" style="left:536.00px;top:346.17px;font-size:8.300px;color:#505050;">Total Echo Reduction</div>
<div class="t" style="left:536.00px;top:357.17px;font-size:8.300px;color:#505050;">(ERL + ERLE)</div>
<div class="a" style="left:574.5px;top:369px;width:5.5px;height:82.69999999999999px;background:#2a2a2a"></div>
<div class="a" style="left:582px;top:369px;width:2px;height:1px;background:#555"></div>
<div class="t" style="left:587.00px;top:365.57px;font-size:7.600px;color:#505050;">50</div>
<div class="a" style="left:582px;top:377px;width:2px;height:1px;background:#555"></div>
<div class="t" style="left:587.00px;top:373.82px;font-size:7.600px;color:#505050;">40</div>
<div class="a" style="left:582px;top:386px;width:2px;height:0px;background:#555"></div>
<div class="t" style="left:587.00px;top:382.07px;font-size:7.600px;color:#505050;">30</div>
<div class="a" style="left:582px;top:394px;width:2px;height:1px;background:#555"></div>
<div class="t" style="left:587.00px;top:390.32px;font-size:7.600px;color:#505050;">20</div>
<div class="a" style="left:582px;top:402px;width:2px;height:1px;background:#555"></div>
<div class="t" style="left:587.00px;top:398.57px;font-size:7.600px;color:#505050;">10</div>
<div class="a" style="left:582px;top:410px;width:2px;height:1px;background:#555"></div>
<div class="t" style="left:587.00px;top:406.82px;font-size:7.600px;color:#505050;">0</div>
<div class="a" style="left:582px;top:418px;width:2px;height:2px;background:#555"></div>
<div class="t" style="left:587.00px;top:415.07px;font-size:7.600px;color:#505050;">-10</div>
<div class="a" style="left:582px;top:427px;width:2px;height:1px;background:#555"></div>
<div class="t" style="left:587.00px;top:423.32px;font-size:7.600px;color:#505050;">-20</div>
<div class="a" style="left:582px;top:435px;width:2px;height:1px;background:#555"></div>
<div class="t" style="left:587.00px;top:431.57px;font-size:7.600px;color:#505050;">-30</div>
<div class="a" style="left:582px;top:443px;width:2px;height:1px;background:#555"></div>
<div class="t" style="left:587.00px;top:439.82px;font-size:7.600px;color:#505050;">-40</div>
<div class="a" style="left:582px;top:452px;width:2px;height:0px;background:#555"></div>
<div class="t" style="left:587.00px;top:448.07px;font-size:7.600px;color:#505050;">-50</div>
<div class="t" style="left:561.00px;top:454.88px;font-size:9.000px;color:#505050;">-198 dB</div>
<div class="a" style="left:655.3px;top:231.4px;width:161.5px;height:253.4px;border:1px solid #d6d6d6;border-radius:3px"></div>
<div class="a" style="left:658px;top:229px;width:153px;height:5px;background:#fff"></div>
<svg style="left:660px;top:226px" width="13" height="13" viewBox="0 0 13 13"><rect x="0.6" y="0.6" width="11.8" height="11.8" rx="2" fill="#fff" stroke="#5d6a74" stroke-width="1.2"/></svg>
<div class="t" style="left:676.25px;top:226.73px;font-size:11.655px;color:#2d3e4a;transform:scaleX(0.9524);transform-origin:0 0;-webkit-text-stroke:0.2px #2d3e4a">Enable Push to Talk Mode</div>
<div class="a" style="left:673.6px;top:246.25px;width:45.39999999999998px;height:220.75px;background:#a9a9a9;border:1px solid #5e5e5e;border-radius:5px"></div>
<div class="t" style="left:680.40px;top:251.12px;font-size:8.600px;color:#505050;">Pre Gain</div>
<div class="a" style="left:694.8px;top:261.8px;width:4.800000000000068px;height:189.2px;background:#2a2a2a"></div>
<div class="a" style="left:701px;top:262px;width:2px;height:1px;background:#555"></div>
<div class="t" style="left:704.50px;top:258.06px;font-size:8.200px;color:#505050;">20</div>
<div class="a" style="left:701px;top:300px;width:2px;height:1px;background:#555"></div>
<div class="t" style="left:704.50px;top:295.86px;font-size:8.200px;color:#505050;">10</div>
<div class="a" style="left:701px;top:338px;width:2px;height:1px;background:#555"></div>
<div class="t" style="left:704.50px;top:333.66px;font-size:8.200px;color:#505050;">0</div>
<div class="a" style="left:701px;top:375px;width:2px;height:1px;background:#555"></div>
<div class="t" style="left:704.50px;top:371.46px;font-size:8.200px;color:#505050;">-10</div>
<div class="a" style="left:701px;top:413px;width:2px;height:1px;background:#555"></div>
<div class="t" style="left:704.50px;top:409.26px;font-size:8.200px;color:#505050;">-20</div>
<div class="a" style="left:701px;top:451px;width:2px;height:1px;background:#555"></div>
<div class="t" style="left:704.50px;top:447.06px;font-size:8.200px;color:#505050;">-30</div>
<div class="t" style="left:682.80px;top:454.68px;font-size:9.000px;color:#505050;">-99 dB</div>
<div class="a" style="left:734px;top:246.25px;width:65px;height:220.75px;background:#fff;border:1.2px solid #5e5e5e;border-radius:6px"></div>
<div class="t" style="left:738.70px;top:251.00px;font-size:8.736px;color:#333;transform:scaleX(0.9524);transform-origin:0 0;">PTT Threshold</div>
<div class="a" style="left:762px;top:266px;width:3px;height:175.5px;background:#dcdcdc;border:0.5px solid #c8c8c8"></div>
<div class="a" style="left:772px;top:266.5px;width:2px;height:179px;background:repeating-linear-gradient(#333 0 1.3px,transparent 1.3px 7.375px)"></div>
<div class="t" style="left:778.30px;top:260.89px;font-size:8.400px;color:#333;">0</div>
<div class="t" style="left:775.00px;top:437.69px;font-size:8.400px;color:#333;">-120</div>
<svg style="left:758px;top:393.5px" width="17" height="9" viewBox="0 0 17 9"><path d="M1.5 0.5 H11.5 L15.5 4.25 L11.5 8 H1.5 Q0.5 8 0.5 7 V1.5 Q0.5 0.5 1.5 0.5 Z" fill="#e8e8e8" stroke="#9a9a9a" stroke-width="0.8"/></svg>
<div class="a" style="left:744.3px;top:448.4px;width:44.200000000000045px;height:14.800000000000011px;background:#fff;border:1px solid #dadada"></div>
<div class="t" style="left:750.90px;top:451.95px;font-size:8.800px;color:#222;">-90.0</div>
<svg style="left:778px;top:450px" width="7" height="11" viewBox="0 0 7 11"><path d="M0.8 4 L3.5 1.2 L6.2 4 M0.8 7 L3.5 9.8 L6.2 7" fill="none" stroke="#222" stroke-width="1.3"/></svg>
<div class="a" style="left:553.5px;top:510.5px;width:59.5px;height:18.0px;background:#2f3d44;border:1px solid #1f2a30;border-radius:1.5px"></div>
<div class="t" style="left:573.00px;top:515.52px;font-size:8.830px;color:#f4f6f6;transform:scaleX(0.9434);transform-origin:0 0;">Close</div>
</body></html>
